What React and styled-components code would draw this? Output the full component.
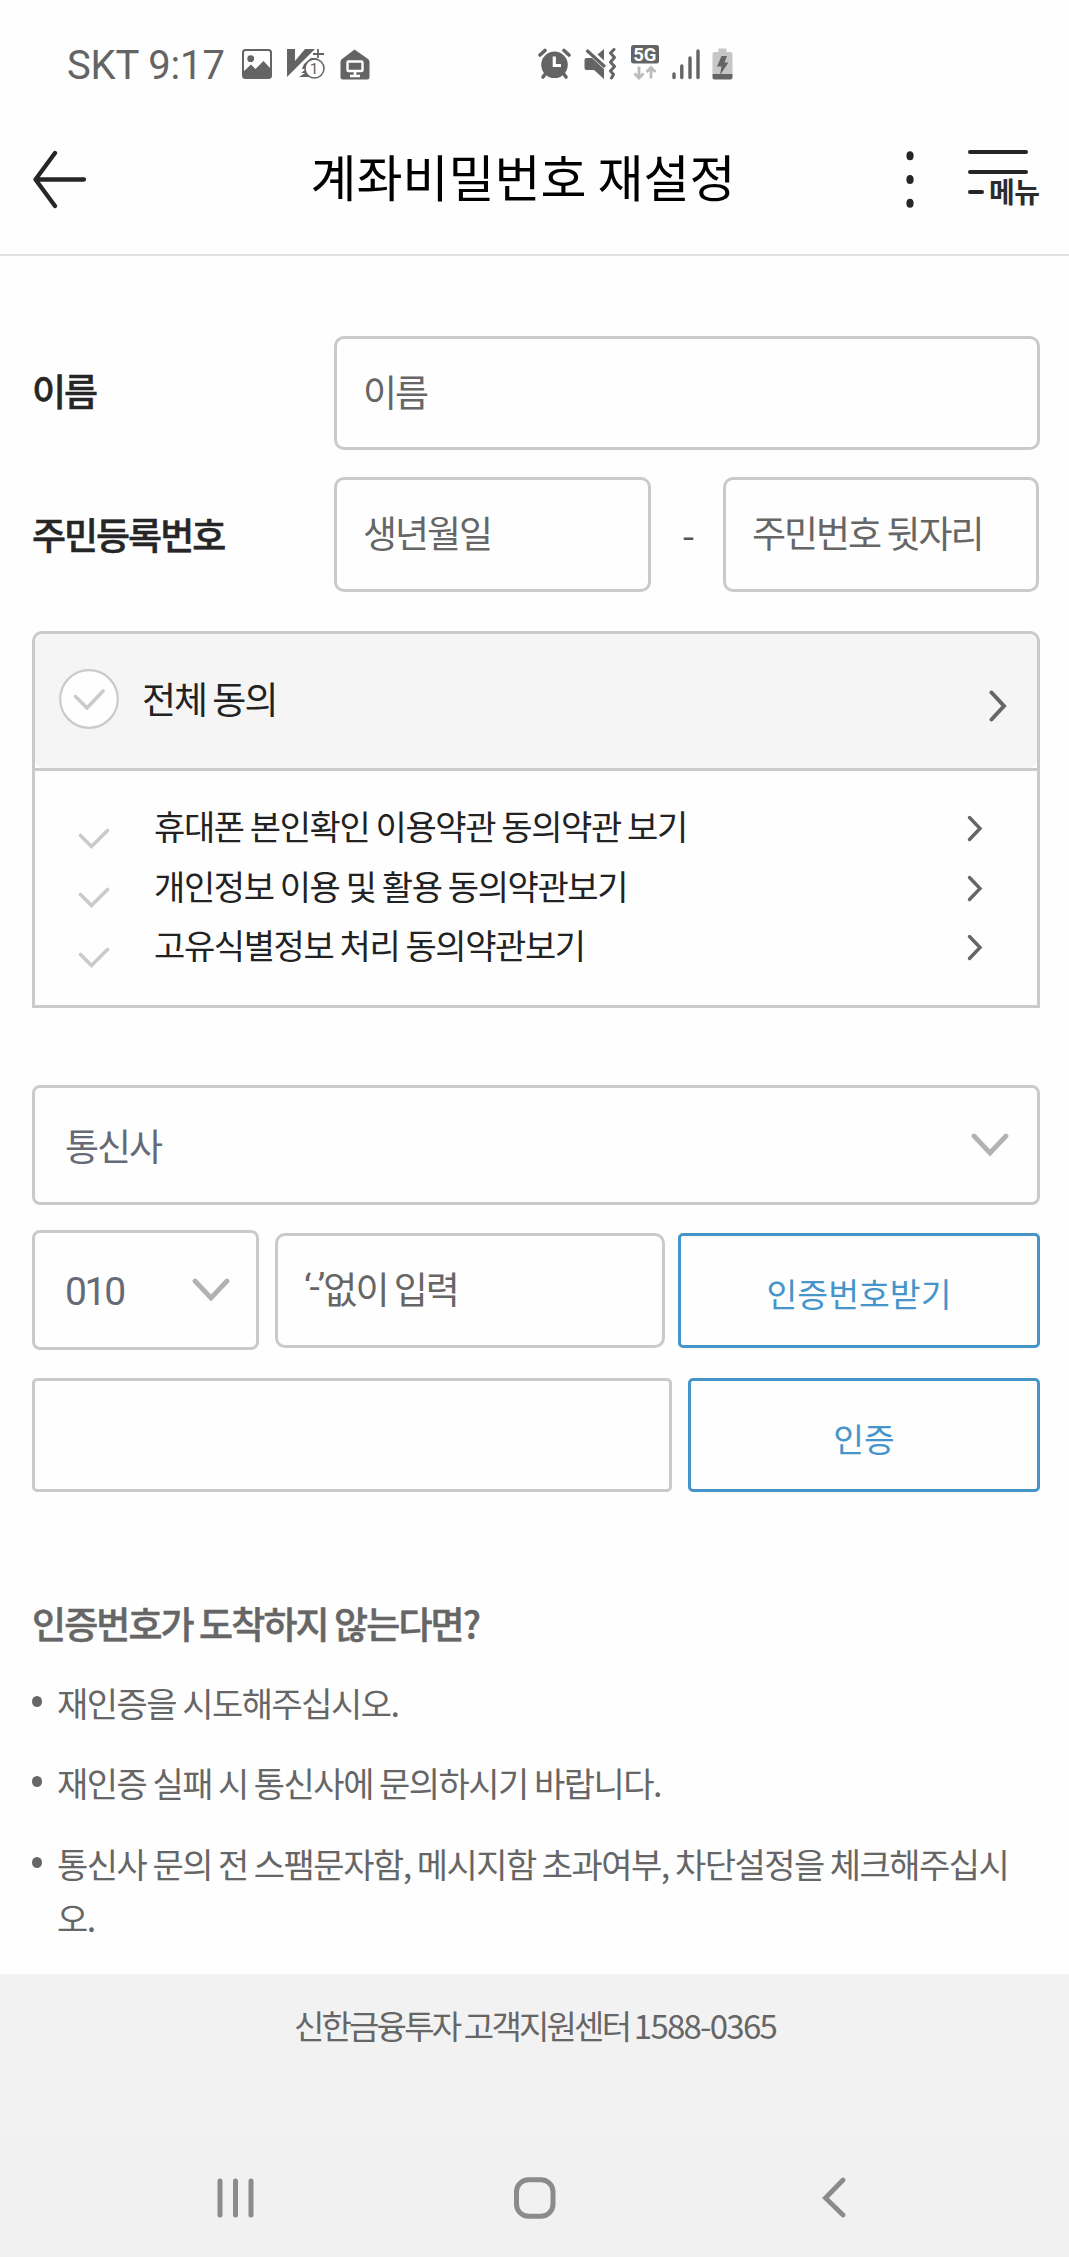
import React from "react";
import styled, { createGlobalStyle } from "styled-components";

const GlobalStyle = createGlobalStyle`
  *, *::before, *::after { box-sizing: border-box; }
  html, body { margin: 0; padding: 0; background: #fefefe; }
  body { font-family: "Noto Sans CJK KR", "Noto Sans", sans-serif; color: #222; }
  svg { display: block; flex: none; }
`;

const Screen = styled.div`
  width: 1069px;
  height: 2257px;
  display: flex;
  flex-direction: column;
  background: #fefefe;
  overflow: hidden;
`;

const StatusBar = styled.div`
  height: 110px;
  padding: 18px 0 0 67px;
  display: flex;
  align-items: center;
  color: #646464;
`;

const Clock = styled.span`
  width: 175px;
  padding-top: 3px;
  font: 400 40px/48px Roboto, sans-serif;
  letter-spacing: -0.15px;
  white-space: nowrap;
`;

const IconGroup = styled.div`
  display: flex;
  align-items: center;
  gap: ${(p) => p.$gap}px;
  margin-left: ${(p) => p.$left || 0}px;
`;

const TitleBar = styled.header`
  height: 146px;
  padding: 0 27px 6px 32px;
  display: grid;
  grid-template-columns: 150px 1fr 150px;
  align-items: center;
  border-bottom: 2px solid #e2e2e2;
`;

const Title = styled.h1`
  margin: 0;
  padding: 0 28px 8px 0;
  text-align: center;
  font-size: 50px;
  line-height: 60px;
  font-weight: 400;
  color: #000;
  letter-spacing: 0;
  white-space: nowrap;
`;

const HeaderActions = styled.div`
  display: flex;
  align-items: center;
  justify-content: flex-end;
  gap: 54px;
`;

const MenuButton = styled.div`
  width: 74px;
  height: 60px;
  display: flex;
  flex-direction: column;
  padding-top: 1px;
`;

const MenuLine = styled.span`
  width: ${(p) => p.$w}px;
  height: 4px;
  border-radius: 2px;
  background: #262626;
  margin-bottom: ${(p) => p.$gap || 0}px;
`;

const MenuLast = styled.div`
  display: flex;
  align-items: center;
  gap: 5px;
  height: 28px;
  color: #2c2c2c;
  font-size: 28px;
  line-height: 28px;
  font-weight: 700;
  letter-spacing: -0.6px;
  white-space: nowrap;
`;

const MenuText = styled.span`
  padding-bottom: 2px;
`;

const Content = styled.main`
  height: 1718px;
  padding: 80px 29px 0 32px;
  display: flex;
  flex-direction: column;
`;

const Row = styled.div`
  display: flex;
  align-items: center;
  margin-top: ${(p) => p.$top || 0}px;
`;

const Label = styled.div`
  width: 302px;
  padding-bottom: ${(p) => p.$lift}px;
  font-size: 37px;
  line-height: 48px;
  font-weight: 500;
  -webkit-text-stroke: 0.5px currentColor;
  color: #262626;
  letter-spacing: -2px;
  white-space: nowrap;
`;

const Field = styled.div`
  width: ${(p) => p.$w}px;
  height: ${(p) => p.$h || 115}px;
  border: 3px solid #cacaca;
  border-radius: ${(p) => p.$r || 10}px;
  padding: 0 ${(p) => p.$right || 26}px ${(p) => p.$lift || 5}px ${(p) => p.$left || 26}px;
  display: flex;
  align-items: center;
  justify-content: ${(p) => (p.$spread ? "space-between" : "flex-start")};
  font-size: 37px;
  line-height: 48px;
  color: ${(p) => p.$color || "#666"};
  letter-spacing: -2px;
  white-space: nowrap;
`;

const Digits = styled.span`
  font-family: Roboto, sans-serif;
  font-size: 39px;
  letter-spacing: -2.3px;
  padding-top: 4px;
`;

const Quoted = styled.span`
  font-family: Roboto, sans-serif;
  letter-spacing: -1.9px;
`;

const Dash = styled.span`
  width: 72px;
  padding: 0 0 4px 3px;
  text-align: center;
  color: #555;
  font-size: 37px;
  line-height: 48px;
`;

const Agreements = styled.section`
  margin-top: 39px;
  width: 1008px;
  height: 377px;
  border: 3px solid #cacaca;
  border-radius: 10px 10px 0 0;
  display: flex;
  flex-direction: column;
`;

const AgreeAll = styled.div`
  height: 134px;
  flex: none;
  padding: 0 30px 4px 24px;
  display: flex;
  align-items: center;
  background: #f5f5f5;
  border-radius: 8px;
  font-size: 37px;
  line-height: 48px;
  letter-spacing: -2px;
  color: #222;
`;

const AgreeText = styled.span`
  flex: 1;
  padding: 0 0 2px 23px;
  white-space: nowrap;
`;

const AgreeList = styled.div`
  flex: 1;
  border-top: 3px solid #cacaca;
  padding: 27px 54px 0 43px;
`;

const AgreeItem = styled.div`
  height: 59.5px;
  display: flex;
  align-items: center;
  font-size: 34px;
  line-height: 48px;
  letter-spacing: -1.4px;
  color: #222;
`;

const ItemText = styled.span`
  flex: 1;
  padding: 0 0 3px 44px;
  white-space: nowrap;
`;

const Offset = styled.span`
  padding-top: ${(p) => p.$top}px;
`;

const OutlineButton = styled.button`
  width: ${(p) => p.$w}px;
  height: ${(p) => p.$h}px;
  margin: 0 0 0 ${(p) => p.$left}px;
  padding: 6px 0 0;
  border: 3px solid #4595ca;
  border-radius: 5px;
  background: #fefefe;
  color: #4595ca;
  font-family: inherit;
  font-size: 33.5px;
  line-height: 48px;
  font-weight: 400;
`;

const Gap = styled.span`
  width: ${(p) => p.$w}px;
`;

const Notice = styled.section`
  margin-top: 104px;
  color: #666;
`;

const NoticeTitle = styled.h2`
  margin: 0;
  font-size: 37px;
  line-height: 54px;
  font-weight: 500;
  -webkit-text-stroke: 0.5px currentColor;
  letter-spacing: -1.9px;
  white-space: nowrap;
`;

const NoticeList = styled.ul`
  margin: 26px 0 0;
  padding: 0;
  list-style: none;
  display: flex;
  flex-direction: column;
  gap: 26.3px;
`;

const NoticeItem = styled.li`
  display: flex;
  align-items: flex-start;
  font-size: 34px;
  line-height: 54px;
  letter-spacing: -1.52px;
`;

const Bullet = styled.span`
  flex: none;
  width: 10px;
  height: 11px;
  margin: 20px 15px 0 0;
  border-radius: 50%;
  background: #666;
`;

const NoticeText = styled.span`
  white-space: pre;
`;

const Footer = styled.footer`
  height: 157px;
  padding: 25px 0 0 1px;
  background: #f2f2f2;
  text-align: center;
  color: #666;
  font-size: 33px;
  line-height: 52px;
  letter-spacing: -2.8px;
  white-space: nowrap;
`;

const Phone = styled.span`
  letter-spacing: -1.75px;
`;

const NavBar = styled.nav`
  height: 126px;
  padding: 8px 220px 0 213px;
  background: #f1f1f1;
  display: flex;
  align-items: center;
  justify-content: space-between;
`;

const Chevron = ({ w, h, color, stroke = 4, down }) => (
  <svg width={w} height={h} viewBox={`0 0 ${w} ${h}`} fill="none">
    <path
      d={down ? `M3 3L${w / 2} ${h - 4}L${w - 3} 3` : `M2.5 2.5L${w - 3} ${h / 2}L2.5 ${h - 2.5}`}
      stroke={color}
      strokeWidth={stroke}
      strokeLinecap="round"
    />
  </svg>
);

const Check = () => (
  <svg width="32" height="22" viewBox="0 0 32 22" fill="none">
    <path d="M2.5 7.5L13.5 18.5L29.5 2.5" stroke="#cacaca" strokeWidth="3.6" strokeLinecap="round" />
  </svg>
);

const CircleCheck = () => (
  <svg width="60" height="60" viewBox="0 0 60 60" fill="none">
    <circle cx="30" cy="30" r="28.8" fill="#fefefe" stroke="#cacaca" strokeWidth="2.2" />
    <path d="M16.5 27.5L28 39L44 22" stroke="#cacaca" strokeWidth="3.6" strokeLinecap="round" />
  </svg>
);

const PictureIcon = () => (
  <svg width="30" height="30" viewBox="0 0 30 30">
    <rect x="1" y="1" width="28" height="28" rx="2.5" fill="#fefefe" stroke="#646464" strokeWidth="2" />
    <circle cx="8.7" cy="9.7" r="3.4" fill="#646464" />
    <path d="M1 23L9 15.5L13.5 20L21.5 12L29 20V26.5Q29 29 26.5 29H3.5Q1 29 1 26.5Z" fill="#646464" />
  </svg>
);

const VaccineIcon = () => (
  <svg width="38" height="32" viewBox="0 0 38 32">
    <path d="M0 1H8V13L18 1H28L0 29Z" fill="#646464" />
    <path d="M17 16L24 10L30 10L26 29H12L18 25L14 25L19 21L15 21Z" fill="#646464" />
    <path d="M31 1V10M26 6H37" stroke="#646464" strokeWidth="1.8" />
    <circle cx="27.5" cy="20.5" r="9.5" fill="#fefefe" stroke="#646464" strokeWidth="1.5" />
    <text x="27" y="26" textAnchor="middle" fontFamily="Roboto, sans-serif" fontSize="15.5" fill="#646464">1</text>
  </svg>
);

const HomeScreenIcon = () => (
  <svg width="30" height="31" viewBox="0 0 30 31">
    <path d="M14.5 0.5L28 10Q29.5 11 29.5 13V28Q29.5 30.5 27 30.5H3Q0.5 30.5 0.5 28V13Q0.5 11 2 10Z" fill="#646464" />
    <rect x="7.5" y="12.5" width="15" height="9.5" rx="1" fill="none" stroke="#fff" strokeWidth="2.4" />
    <path d="M15 22V27M10 27H20" stroke="#fff" strokeWidth="2.6" />
  </svg>
);

const AlarmIcon = () => (
  <svg width="33" height="32" viewBox="0 0 33 32">
    <path d="M2 7L7 2.5M31 7L26 2.5" stroke="#646464" strokeWidth="3.6" strokeLinecap="round" />
    <path d="M8 25L5 29M25 25L28 29" stroke="#646464" strokeWidth="3.6" strokeLinecap="round" />
    <circle cx="16.5" cy="16.8" r="13.3" fill="#646464" />
    <path d="M16.3 8.5V17.5H23" fill="none" stroke="#fff" strokeWidth="3.2" />
  </svg>
);

const MuteIcon = () => (
  <svg width="35" height="32" viewBox="0 0 35 32" fill="none">
    <path d="M0.5 12Q0.5 10 2.5 10H8L20 21V31L10 22H2.5Q0.5 22 0.5 20Z" fill="#646464" />
    <path d="M13.5 6.5L20 1V12.5Z" fill="#646464" />
    <path d="M3.5 3L20 18" stroke="#646464" strokeWidth="3.2" strokeLinecap="round" />
    <path d="M30 1.5L26.5 5L30.5 9.5L26.5 14L30.5 18.5L26.5 23L29.5 26.5L27.5 30" stroke="#646464" strokeWidth="3" strokeLinejoin="round" strokeLinecap="round" />
  </svg>
);

const FiveGIcon = () => (
  <svg width="28" height="38" viewBox="0 2 28 38">
    <rect x="0" y="0.5" width="28" height="18.5" rx="2.5" transform="translate(0 1.5)" fill="#646464" />
    <text x="13.8" y="17.8" textAnchor="middle" fontFamily="Roboto, sans-serif" fontWeight="700" fontSize="18.5" fill="#fff">5G</text>
    <path d="M8 23.500V34.500M3.5 30.500L8 35L12.5 30.500M20 35.500V25.500M15.5 29L20 24.500L24.5 29" fill="none" stroke="#bcbcbc" strokeWidth="2.8" />
  </svg>
);

const SignalIcon = () => (
  <svg width="28" height="31" viewBox="0 0 28 31">
    <path d="M2 25V28.5M9.8 17V28.5M18 9V28.5M26 2V28.5" stroke="#646464" strokeWidth="3.4" strokeLinecap="round" />
  </svg>
);

const BatteryIcon = () => (
  <svg width="21" height="32" viewBox="0 0 21 32">
    <path d="M6.5 0.5H14.5V4H18.5Q20.5 4 20.5 6V26H0.5V6Q0.5 4 2.5 4H6.5Z" fill="#c6c6c6" />
    <path d="M0.5 26H20.5V29.5Q20.5 31.5 18.5 31.5H2.5Q0.5 31.5 0.5 29.5Z" fill="#646464" />
    <path d="M9.5 8H15L12.5 14.5H16.5L8 27L9.5 18.5H5Z" fill="#646464" />
  </svg>
);

const BackArrow = () => (
  <svg width="56" height="60" viewBox="0 0 56 60" fill="none" stroke="#262626" strokeWidth="4.3" strokeLinecap="round" strokeLinejoin="round">
    <path d="M23 4L3.5 30.5L23 57M3.5 30.5H52" />
  </svg>
);

const MoreDots = () => (
  <svg width="8" height="60" viewBox="0 0 8 60" fill="#262626">
    <ellipse cx="4" cy="6.7" rx="3.6" ry="4.5" />
    <ellipse cx="4" cy="30.4" rx="3.6" ry="4.5" />
    <ellipse cx="4" cy="54.3" rx="3.6" ry="4.5" />
  </svg>
);

const RecentsIcon = () => (
  <svg width="43" height="42" viewBox="0 0 43 42" stroke="#8b8b8b" strokeWidth="5" strokeLinecap="round">
    <path d="M7 4V38M22.5 4V38M38 4V38" />
  </svg>
);

const HomeIcon = () => (
  <svg width="52" height="42" viewBox="0 0 52 42" fill="none">
    <rect x="3.5" y="2.8" width="36.5" height="36.5" rx="12" stroke="#8b8b8b" strokeWidth="5" />
  </svg>
);

const NavBackIcon = () => (
  <svg width="28" height="42" viewBox="0 0 28 42" fill="none">
    <path d="M22 3L4.5 21L22 38" stroke="#8b8b8b" strokeWidth="4.8" strokeLinecap="round" />
  </svg>
);

const terms = [
  "휴대폰 본인확인 이용약관 동의약관 보기",
  "개인정보 이용 및 활용 동의약관보기",
  "고유식별정보 처리 동의약관보기",
];

const notices = [
  "재인증을 시도해주십시오.",
  "재인증 실패 시 통신사에 문의하시기 바랍니다.",
  "통신사 문의 전 스팸문자함, 메시지함 초과여부, 차단설정을 체크해주십시\n오.",
];

export default function App() {
  return (
    <Screen>
      <GlobalStyle />
      <StatusBar>
        <Clock>SKT 9:17</Clock>
        <IconGroup $gap={15}>
          <PictureIcon />
          <VaccineIcon />
          <HomeScreenIcon />
        </IconGroup>
        <IconGroup $gap={12.5} $left={168}>
          <AlarmIcon />
          <MuteIcon />
          <FiveGIcon />
          <SignalIcon />
          <BatteryIcon />
        </IconGroup>
      </StatusBar>

      <TitleBar>
        <BackArrow />
        <Title>계좌비밀번호 재설정</Title>
        <HeaderActions>
          <MoreDots />
          <MenuButton>
            <MenuLine $w={60} $gap={16} />
            <MenuLine $w={60} $gap={4} />
            <MenuLast>
              <MenuLine $w={16} />
              <MenuText>메뉴</MenuText>
            </MenuLast>
          </MenuButton>
        </HeaderActions>
      </TitleBar>

      <Content>
        <Row>
          <Label $lift={6}>이름</Label>
          <Field $w={706} $h={114}>이름</Field>
        </Row>
        <Row $top={27}>
          <Label $lift={1}>주민등록번호</Label>
          <Field $w={317}>생년월일</Field>
          <Dash>-</Dash>
          <Field $w={316}>주민번호 뒷자리</Field>
        </Row>

        <Agreements>
          <AgreeAll>
            <CircleCheck />
            <AgreeText>전체 동의</AgreeText>
            <Offset $top={13}>
              <Chevron w={18} h={32} color="#666" />
            </Offset>
          </AgreeAll>
          <AgreeList>
            {terms.map((term) => (
              <AgreeItem key={term}>
                <Offset $top={22}>
                  <Check />
                </Offset>
                <ItemText>{term}</ItemText>
                <Offset $top={2}>
                  <Chevron w={16} h={27} color="#666" stroke={3.4} />
                </Offset>
              </AgreeItem>
            ))}
          </AgreeList>
        </Agreements>

        <Row $top={77}>
          <Field $w={1008} $h={120} $r={8} $left={30} $right={28} $lift={1} $color="#666a76" $spread>
            통신사
            <Chevron w={38} h={24} color="#b2b2b2" stroke={4.8} down />
          </Field>
        </Row>
        <Row $top={25}>
          <Field $w={227} $h={120} $r={8} $left={30} $right={26} $lift={1} $color="#666a76" $spread>
            <Digits>010</Digits>
            <Chevron w={38} h={24} color="#b2b2b2" stroke={4.8} down />
          </Field>
          <Gap $w={16} />
          <Field $w={390}>
            <Quoted>‘-’</Quoted>
            <span>없이 입력</span>
          </Field>
          <OutlineButton $w={362} $h={115} $left={13}>인증번호받기</OutlineButton>
        </Row>
        <Row $top={28}>
          <Field $w={640} $h={114} $r={5} />
          <OutlineButton $w={352} $h={114} $left={16}>인증</OutlineButton>
        </Row>

        <Notice>
          <NoticeTitle>인증번호가 도착하지 않는다면?</NoticeTitle>
          <NoticeList>
            {notices.map((text) => (
              <NoticeItem key={text}>
                <Bullet />
                <NoticeText>{text}</NoticeText>
              </NoticeItem>
            ))}
          </NoticeList>
        </Notice>
      </Content>

      <Footer>
        신한금융투자 고객지원센터 <Phone>1588-0365</Phone>
      </Footer>
      <NavBar>
        <RecentsIcon />
        <HomeIcon />
        <NavBackIcon />
      </NavBar>
    </Screen>
  );
}
